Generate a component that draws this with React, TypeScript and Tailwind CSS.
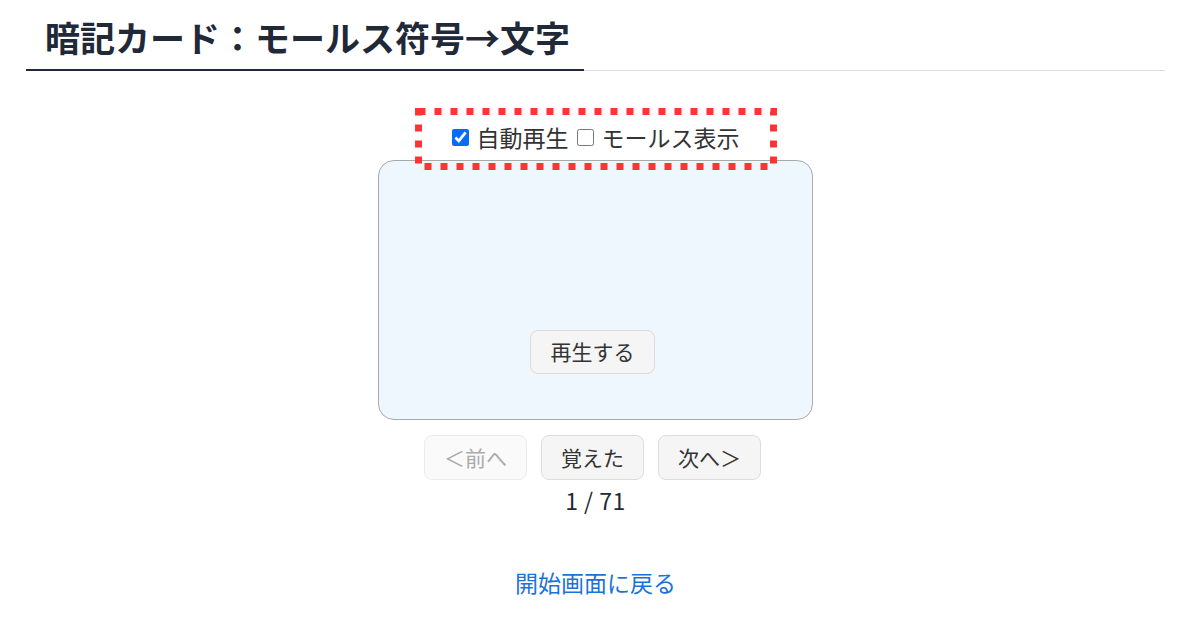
import React from "react";

export default function App() {
  const font = { fontFamily: '"Noto Sans CJK JP", "Noto Sans", sans-serif' };
  return (
    <div className="w-[1200px] h-[630px] bg-white overflow-hidden text-[#333]" style={font}>
      <div className="ml-[26px] w-[1139px] pt-[11px]">
        <div className="border-b border-[#dcdcdc] flex">
          <h1 className="inline-block pl-[19px] pr-[14px] pb-[7px] mb-[-1px] border-b-2 border-[#1e293b] text-[35px] leading-[51px] font-bold text-[#1f2937]">
            暗記カード：モールス符号→文字
          </h1>
        </div>
        <div className="flex flex-col items-center">
          <div className="relative mt-[47px] w-[346px] h-[42px] pb-[4px] flex items-center justify-center gap-[8px] text-[23px] text-[#333]">
            <label className="flex items-center gap-[8px]">
              <input type="checkbox" defaultChecked className="w-[17px] h-[17px] accent-[#0a6cf5]" />
              <span>自動再生</span>
            </label>
            <label className="flex items-center gap-[8px]">
              <input type="checkbox" className="w-[17px] h-[17px]" />
              <span>モールス表示</span>
            </label>
            <svg className="absolute left-[-8px] top-[-10px] pointer-events-none" width="362" height="62" viewBox="0 0 362 62">
              <rect x="3.5" y="3.5" width="355" height="55" fill="none" stroke="#ff3333" strokeWidth="7" strokeDasharray="7 9" />
            </svg>
          </div>
          <div className="w-[435px] h-[260px] rounded-[16px] border border-[#aaaaaa] bg-[#eef6fe] flex flex-col items-center justify-end pb-[45px]">
            <button className="mr-[6px] w-[125px] h-[44px] rounded-[8px] border border-[#dddddd] bg-[#f5f5f5] text-[21px] text-[#333]">
              再生する
            </button>
          </div>
          <div className="mt-[15px] mr-[6px] flex gap-[14px]">
            <button disabled className="w-[103px] h-[45px] rounded-[8px] border border-[#ececec] bg-[#fafafa] text-[21px] text-[#aaaaaa]">
              ＜前へ
            </button>
            <button className="w-[103px] h-[45px] rounded-[8px] border border-[#dddddd] bg-[#f5f5f5] text-[21px] text-[#333]">
              覚えた
            </button>
            <button className="w-[103px] h-[45px] rounded-[8px] border border-[#dddddd] bg-[#f5f5f5] text-[21px] text-[#333]">
              次へ＞
            </button>
          </div>
          <div className="mt-[4px] text-[23px] leading-[33px] text-[#1f2937] tracking-[0.5px]">1 / 71</div>
          <a href="#" className="mt-[49px] text-[23px] leading-[33px] text-[#1a73d9]">
            開始画面に戻る
          </a>
        </div>
      </div>
    </div>
  );
}
